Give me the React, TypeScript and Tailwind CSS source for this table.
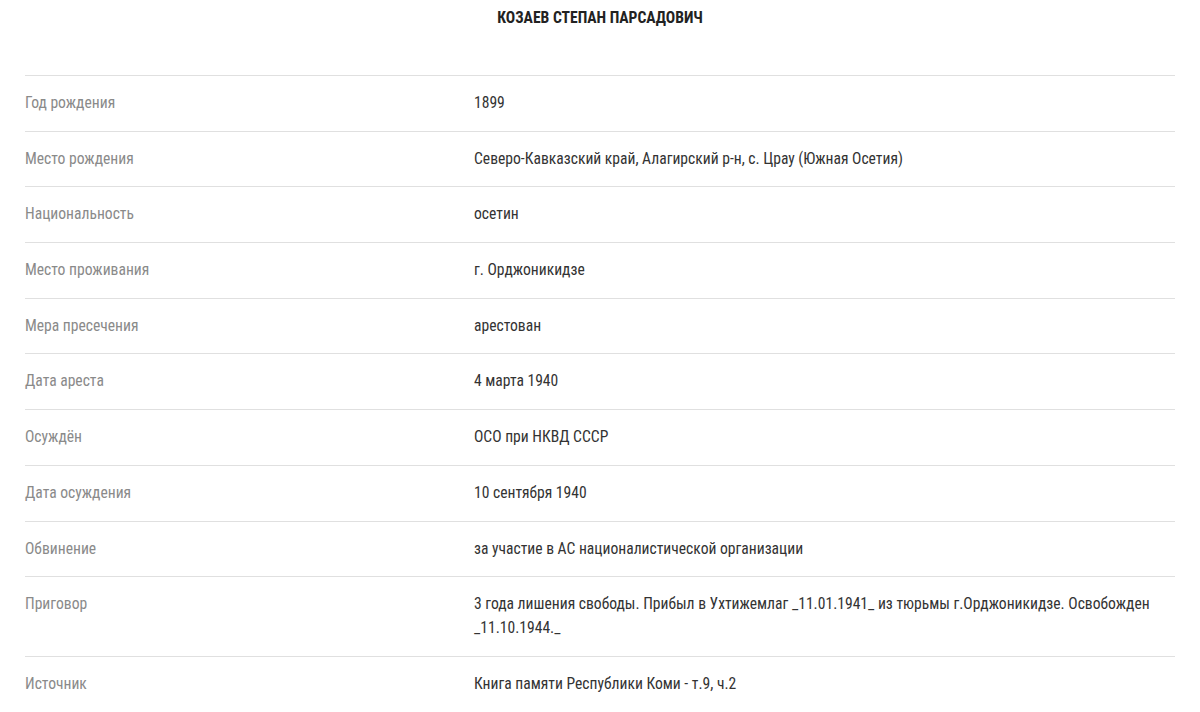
import React from "react";

const rows: [string, string][] = [
  ["Год рождения", "1899"],
  ["Место рождения", "Северо-Кавказский край, Алагирский р-н, с. Црау (Южная Осетия)"],
  ["Национальность", "осетин"],
  ["Место проживания", "г. Орджоникидзе"],
  ["Мера пресечения", "арестован"],
  ["Дата ареста", "4 марта 1940"],
  ["Осуждён", "ОСО при НКВД СССР"],
  ["Дата осуждения", "10 сентября 1940"],
  ["Обвинение", "за участие в АС националистической организации"],
  [
    "Приговор",
    "3 года лишения свободы. Прибыл в Ухтижемлаг _11.01.1941_ из тюрьмы г.Орджоникидзе. Освобожден _11.10.1944._",
  ],
  ["Источник", "Книга памяти Республики Коми - т.9, ч.2"],
];

export default function App() {
  return (
    <div
      className="bg-white min-h-[712px] px-[25px]"
      style={{ fontFamily: '"Roboto Condensed", Roboto, "Liberation Sans", sans-serif', fontStretch: "condensed" }}
    >
      <h1 className="text-center font-bold text-[15.6px] leading-[20px] text-[#222] pt-[8px] pb-[47px]">
        КОЗАЕВ СТЕПАН ПАРСАДОВИЧ
      </h1>
      <div className="border-b border-[#e0e0e0]">
        {rows.map(([k, v]) => (
          <div
            key={k}
            className="grid grid-cols-[449px_1fr] border-t border-[#e0e0e0] pt-[15px] pb-[15.7px] text-[15.6px] leading-[24px]"
          >
            <div className="text-[#8a8a8a]">{k}</div>
            <div className="text-[#333]">{v}</div>
          </div>
        ))}
      </div>
    </div>
  );
}
